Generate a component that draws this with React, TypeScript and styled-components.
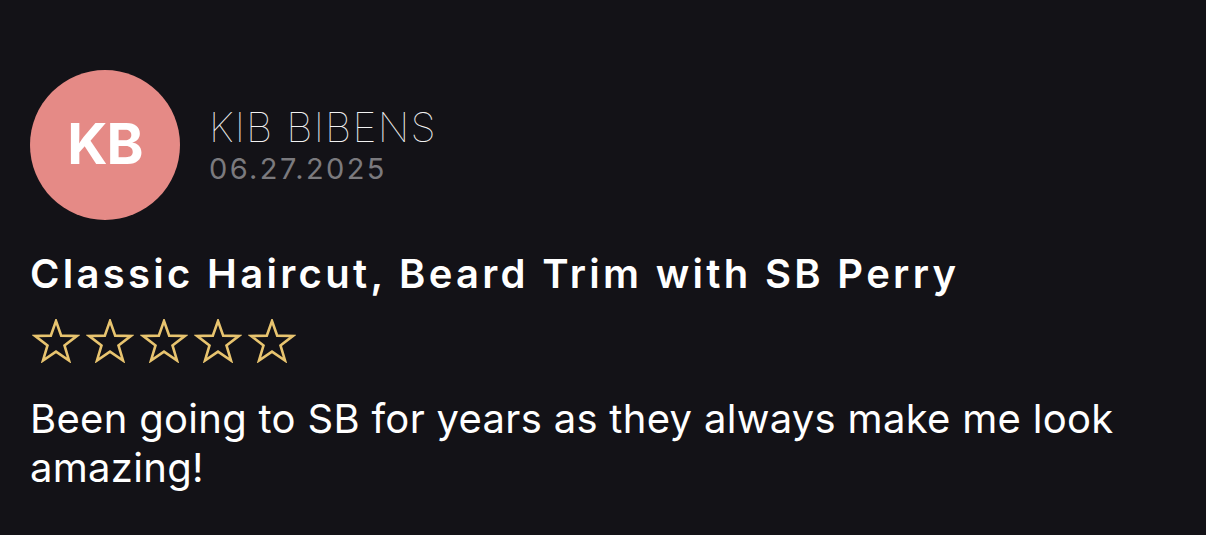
import { createGlobalStyle, styled } from 'styled-components'

const GlobalStyle = createGlobalStyle`
    html, body {
        margin: 0;
        padding: 0;
        background: #131217;
    }
    body {
        font-family: Inter, "Noto Sans", sans-serif;
        color: #ffffff;
    }
`

const review = {
    initials: 'KB',
    name: 'KIB BIBENS',
    date: '06.27.2025',
    title: 'Classic Haircut, Beard Trim with SB Perry',
    rating: 0,
    text: 'Been going to SB for years as they always make me look amazing!',
}

const Star = ({ filled }: { filled: boolean }) => (
    <svg width="48" height="44" viewBox="0 0 48 44">
        <path
            d="M24 2 L29.2 16.6 L45 16.9 L32.5 26.4 L37 41.5 L24 32.6 L11 41.5 L15.5 26.4 L3 16.9 L18.8 16.6 Z"
            fill={filled ? '#e8c46f' : 'none'}
            stroke="#e8c46f"
            strokeWidth="2.6"
            strokeLinejoin="miter"
        />
    </svg>
)

export default function App() {
    return (
        <>
            <GlobalStyle />
            <Card>
                <Header>
                    <Avatar>{review.initials}</Avatar>
                    <Author>
                        <Name>{review.name}</Name>
                        <DateText>{review.date}</DateText>
                    </Author>
                </Header>
                <Title>{review.title}</Title>
                <Stars>
                    {[1, 2, 3, 4, 5].map(i => (
                        <Star key={i} filled={i <= review.rating} />
                    ))}
                </Stars>
                <Body>{review.text}</Body>
            </Card>
        </>
    )
}

const Card = styled.section`
    width: 1206px;
    height: 535px;
    box-sizing: border-box;
    padding: 70px 60px 0 30px;
    display: flex;
    flex-direction: column;
    background: #131217;
`

const Header = styled.div`
    display: flex;
    align-items: center;
    gap: 29px;
`

const Avatar = styled.div`
    width: 150px;
    height: 150px;
    flex-shrink: 0;
    border-radius: 50%;
    background: #e58a86;
    display: flex;
    align-items: center;
    justify-content: center;
    color: #ffffff;
    font-size: 56px;
    font-weight: 700;
    letter-spacing: -1px;
    line-height: 1;
    padding-bottom: 2px;
    box-sizing: border-box;
`

const Author = styled.div`
    display: flex;
    flex-direction: column;
    gap: 4px;
`

const Name = styled.span`
    font-size: 41px;
    font-weight: 100;
    line-height: 44px;
    letter-spacing: 1.2px;
    color: #f2f2f2;
`

const DateText = styled.span`
    font-size: 29px;
    font-weight: 400;
    line-height: 32px;
    letter-spacing: 2.4px;
    color: #7b7a7e;
`

const Title = styled.h2`
    margin: 30px 0 0;
    font-size: 40px;
    font-weight: 600;
    line-height: 48px;
    letter-spacing: 3.3px;
    color: #ffffff;
`

const Stars = styled.div`
    display: flex;
    gap: 6px;
    margin-top: 21px;
    margin-left: 2px;
`

const Body = styled.p`
    margin: 31px 0 0;
    font-size: 40px;
    font-weight: 400;
    line-height: 49px;
    letter-spacing: 0.3px;
    color: #ffffff;
`
